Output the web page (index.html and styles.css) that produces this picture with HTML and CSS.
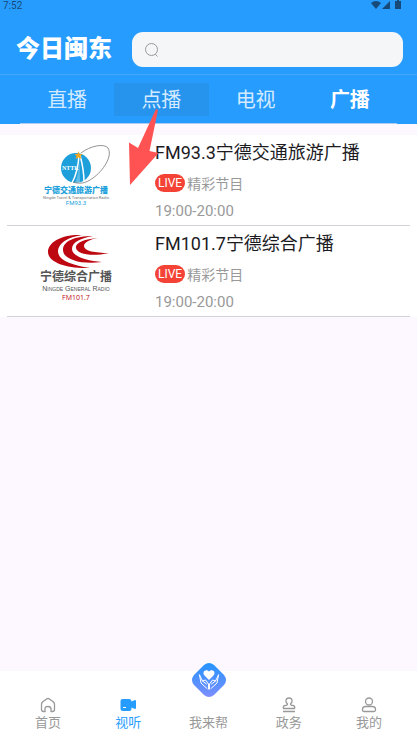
FILE: index.html
```html
<!DOCTYPE html>
<html lang="zh-CN">
<head>
  <meta charset="UTF-8" />
  <meta name="viewport" content="width=device-width, initial-scale=1.0"/>
  <title>今日闽东</title>
  <link rel="stylesheet" href="styles.css">
</head>
<body>
  <header class="header">
    <div class="status-bar">
      <span>7:52</span>
      <svg class="status-icons" viewBox="0 0 32 10" width="32" height="10" aria-hidden="true">
        <path d="M1 3C4 .2 8 .2 11 3L6 9z"/>
        <path d="M20 1v8h-8z"/>
        <path d="M27 0h2v1h2v8h-6V1h2z"/>
      </svg>
    </div>

    <div class="search-row">
      <h1 class="brand">今日闽东</h1>
      <label class="search-box">
        <svg viewBox="0 0 16 16" width="16" height="16" aria-hidden="true">
          <circle cx="7.5" cy="7.500" r="6"/>
          <path d="M10 12.500h1.500l2 2"/>
        </svg>
        <input type="search" aria-label="搜索">
      </label>
    </div>

    <nav class="tabs">
      <button class="tab">直播</button>
      <button class="tab pressed">点播
        <svg class="arrow" viewBox="0 0 30 77" width="30" height="77" aria-hidden="true">
          <path d="M27 0L29 1L20.500 42L29.500 44L1 76L0 33.500L9 39z"/>
        </svg>
      </button>
      <button class="tab">电视</button>
      <button class="tab active">广播</button>
    </nav>
  </header>

  <main class="stations">
    <a class="station" href="#">
      <div class="station-logo traffic">
        <svg viewBox="0 0 52 42" width="52" height="42" aria-hidden="true">
          <circle cx="17" cy="24" r="15" fill="#1c9fdb"/>
          <path d="M20 11Q19 28 13 39M21 11Q25 26 25 38" stroke="#fff" stroke-width="1.500" fill="none"/>
          <path d="M20.500 15Q20 30 16 39h5z" fill="#fff" opacity=".3"/>
          <path d="M22 9C31 2 45-1 49 4C54 12 44 27 34 34C26 40 20 40 14 38" fill="none" stroke="#777" stroke-width=".8"/>
          <path d="M19.500 7l1 3h3l-2 2 1 3-3-1.500-3 1.500 1-3-2-2h3z" fill="#f5a623"/>
          <text x="3" y="26" class="logo-initials">NTTR</text>
        </svg>
        <strong>宁德交通旅游广播</strong>
        <small>Ningde Travel &amp; Transportation Radio</small>
        <em>FM93.3</em>
      </div>
      <div class="station-info">
        <h2>FM93.3宁德交通旅游广播</h2>
        <p class="program"><span class="live">LIVE</span>精彩节目</p>
        <p class="time">19:00-20:00</p>
      </div>
    </a>

    <a class="station" href="#">
      <div class="station-logo general">
        <svg viewBox="0 0 62 36" width="62" height="36" aria-hidden="true">
          <g fill="#bd0811">
            <path d="M34 1C14 0 0 8 0 18C0 28 18 35 42 34C24 31 11 27 10 18C10 8 22 3 34 1z"/>
            <path d="M45 2C27 2 15 7 15 16C15 25 32 31 54 28C38 27 24 22 24 15C24 8 33 4 45 2z"/>
            <path d="M50 4C36 5 27 9 28 14C29 20 43 23 61 19C47 19 36 17 36 12C36 8 43 5 50 4z"/>
          </g>
        </svg>
        <strong>宁德综合广播</strong>
        <small>Ningde General Radio</small>
        <em>FM101.7</em>
      </div>
      <div class="station-info">
        <h2>FM101.7宁德综合广播</h2>
        <p class="program"><span class="live">LIVE</span>精彩节目</p>
        <p class="time">19:00-20:00</p>
      </div>
    </a>
  </main>

  <nav class="bottom-nav">
    <a href="#">
      <svg class="line-icon" viewBox="0 0 16 16" width="16" height="16" aria-hidden="true">
        <path d="M5 14.500H3.500Q1.500 14.500 1.500 12.500V7.500Q1.500 6 2.500 5L6.500 2Q8 1 9.500 2L13.500 5Q14.500 6 14.500 7.500V12.500Q14.500 14.500 12.500 14.500H11V12Q11 9.500 8 9.500Q5 9.500 5 12z"/>
      </svg>
      <span>首页</span>
    </a>
    <a href="#" class="current">
      <svg viewBox="0 0 16 16" width="16" height="16" aria-hidden="true">
        <path d="M2.500 2H9q2.500 0 2.500 2.500L15 3q1 0 1 1v7q0 1-1 1l-3.500-1.500v1Q11.500 14 9 14H3Q.5 14 .5 11.500V4q0-2 2-2z" fill="currentColor"/>
        <path d="M3 10.500h3" stroke="#fff"/>
      </svg>
      <span>视听</span>
    </a>
    <a href="#">
      <svg class="help-icon" viewBox="0 0 36 36" width="36" height="36" aria-hidden="true">
        <defs>
          <linearGradient id="help-fill" x1="0" y1="0" x2="0" y2="1">
            <stop offset="0" stop-color="#2494ff"/>
            <stop offset="1" stop-color="#7d8eff"/>
          </linearGradient>
        </defs>
        <path d="M13 3Q18-1 23 3L33 13Q37 18 33 23L23 33Q18 37 13 33L3 23Q-1 18 3 13z" fill="url(#help-fill)"/>
        <path d="M18 18l-4-4C10 10 15 6 18 9.500C21 6 26 10 22 14z" fill="#fff"/>
        <path d="M8.500 13l1.500 8 6 5.500M8.500 13l3 6 4 3M11.500 19l3-1 3 4v5M27.500 13L26 21l-6 5.500M27.500 13l-3 6-4 3M24.500 19l-3-1-3 4v5" fill="none" stroke="#fff" stroke-linecap="round" stroke-linejoin="round"/>
      </svg>
      <span>我来帮</span>
    </a>
    <a href="#">
      <svg class="line-icon" viewBox="0 0 16 16" width="16" height="16" aria-hidden="true">
        <path d="M2.500 11.500Q1.500 9 4 8.500Q6.500 8.500 6.500 7L5 5Q4.500 1 8 1Q11.500 1 11 5L9.500 7Q9.500 8.500 12 8.500Q14.500 9 13.500 11.500zM2 14.500h12"/>
      </svg>
      <span>政务</span>
    </a>
    <a href="#">
      <svg class="line-icon" viewBox="0 0 16 16" width="16" height="16" aria-hidden="true">
        <circle cx="8" cy="4.500" r="3.500"/>
        <path d="M1.500 12.500Q1.500 9.500 4.500 9.500H11.500Q14.500 9.500 14.500 12.500V13Q14.500 14.500 13 14.500H3Q1.500 14.500 1.500 13z"/>
      </svg>
      <span>我的</span>
    </a>
  </nav>
</body>
</html>
```

FILE: styles.css
```css
:root {
  --primary-color: #279cff;
  --page-bg: #fdf7ff;
  --muted: #999;
  --line: #d3d2d8;
}

* {
  box-sizing: border-box;
}

body {
  margin: 0;
  min-height: 100vh;
  display: flex;
  flex-direction: column;
  background: var(--page-bg);
  font-family: Roboto, "Noto Sans CJK SC", sans-serif;
}

h1, h2, p {
  margin: 0;
  font-weight: 400;
}

a {
  color: inherit;
  text-decoration: none;
}

.header {
  background: var(--primary-color);
}

.status-bar {
  display: flex;
  justify-content: space-between;
  height: 32px;
  padding: 0 15px 0 3px;
  font-size: 10px;
  line-height: 12px;
  color: #174a79;
}

.status-icons {
  fill: #174a79;
}

.search-row {
  display: flex;
  align-items: center;
  gap: 20px;
  padding: 0 14px 7px 16px;
  border-bottom: 1px solid #45a8fc;
}

.brand {
  font-size: 24px;
  line-height: 35px;
  font-weight: 900;
  color: #fff;
}

.search-box {
  flex: 1;
  min-width: 0;
  height: 35px;
  display: flex;
  align-items: center;
  gap: 8px;
  padding: 0 12px;
  border-radius: 11px;
  background: #f5f6f8;
}

.search-box svg {
  fill: none;
  stroke: #999;
}

.search-box input {
  flex: 1;
  min-width: 0;
  border: none;
  outline: none;
  background: none;
  font-size: 14px;
}

.tabs {
  display: flex;
  margin: 0 20px;
  padding: 8px 0 7px;
  border-bottom: 1px solid #a9cdf2;
}

.tab {
  flex: 1;
  position: relative;
  height: 33px;
  padding: 0;
  border: none;
  background: none;
  font-family: inherit;
  font-size: 20px;
  line-height: 32px;
  color: #d4ebff;
}

.tab.pressed {
  background: #2693ed;
}

.tab.active {
  color: #fff;
  font-weight: 700;
}

/* swipe pointer lies over the list below the tabs */
.arrow {
  position: absolute;
  left: 15px;
  top: 26px;
  z-index: 1;
  fill: #ff5252;
}

.stations {
  flex: 1;
  padding-top: 11px;
}

.station {
  display: flex;
  padding: 0 7px;
  background: #fff;
}

.station-logo,
.station-info {
  height: 91px;
  border-bottom: 1px solid var(--line);
}

.station-logo {
  width: 148px;
  padding-right: 10px;
  display: flex;
  flex-direction: column;
  align-items: center;
  white-space: nowrap;
}

.station-logo em {
  font-style: normal;
}

.traffic {
  padding-top: 9px;
  color: #1c9fdb;
}

.traffic svg {
  margin-left: 18px;
  overflow: visible;
}

.logo-initials {
  font: 700 6px "Liberation Serif", serif;
  fill: #fff;
}

.traffic strong {
  font-size: 8px;
  line-height: 10px;
  font-weight: 900;
}

.traffic small {
  font-size: 4px;
  line-height: 4px;
  color: #777;
}

.traffic em {
  font-size: 6px;
  line-height: 6px;
}

.general {
  padding-top: 8px;
  color: #555;
}

.general svg {
  margin-left: 6px;
}

.general strong {
  font-size: 12px;
  line-height: 15px;
  font-weight: 700;
}

.general small {
  font-family: "Liberation Sans", sans-serif;
  font-size: 7px;
  line-height: 8px;
  font-variant: small-caps;
}

.general em {
  font-family: "Open Sans", sans-serif;
  font-size: 7px;
  line-height: 9px;
  color: #bd0811;
}

.station-info {
  flex: 1;
  min-width: 0;
  padding-top: 4px;
}

.station-info h2 {
  font-size: 18px;
  line-height: 28px;
  color: #1c1b1f;
}

.program {
  display: flex;
  align-items: center;
  gap: 2px;
  height: 32px;
  font-size: 14px;
  color: var(--muted);
}

.live {
  padding: 0 3px;
  border-radius: 9px;
  background: #f44336;
  font-size: 12px;
  line-height: 18px;
  color: #fff;
}

.time {
  font-size: 15px;
  line-height: 24px;
  color: var(--muted);
}

.bottom-nav {
  display: flex;
  height: 70px;
  padding: 0 8px 8px;
  background: #fff;
  font-size: 13px;
  line-height: 20px;
  color: var(--muted);
}

.bottom-nav a {
  flex: 1;
  display: flex;
  flex-direction: column;
  align-items: center;
  justify-content: flex-end;
}

.bottom-nav svg {
  flex-shrink: 0;
}

.bottom-nav .current {
  color: var(--primary-color);
}

.line-icon {
  fill: none;
  stroke: currentColor;
  stroke-width: 1.3px;
}

.help-icon {
  margin-bottom: 15px;
}
```
